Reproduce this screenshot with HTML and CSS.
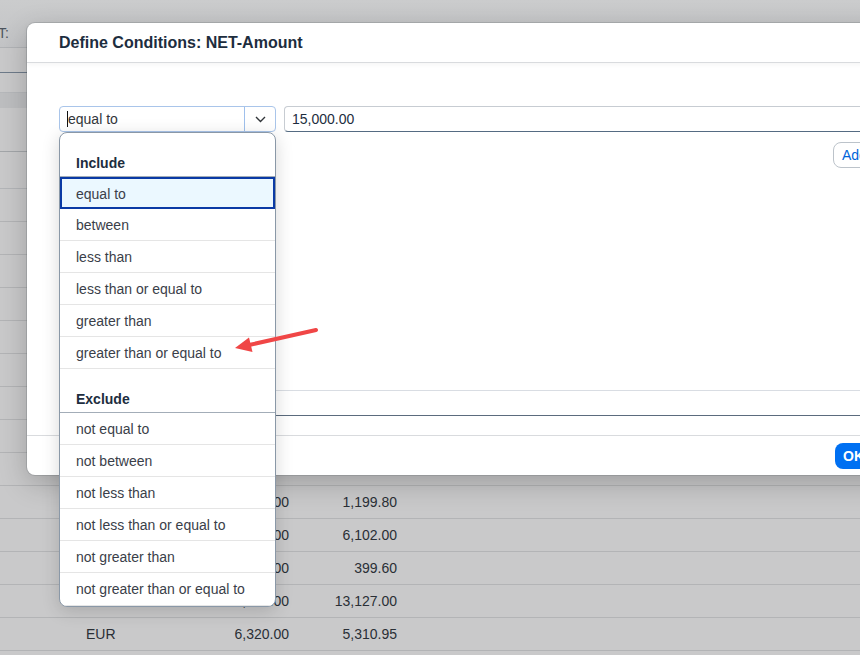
FILE: index.html
```html
<!DOCTYPE html>
<html lang="en">
<head>
<meta charset="utf-8">
<title>Define Conditions</title>
<link rel="stylesheet" href="styles.css">
</head>
<body>
<div class="page">
  <div class="topbar"><div class="cut"><span>NET-AMOUNT:</span></div></div>
  <div class="bgrow r1"></div>
  <div class="bgrow r2"></div>
  <div class="band"></div>
  <div class="bgrow r3"></div>
  <div class="bgrow r4"></div>
  <div class="trow"></div><div class="trow"></div><div class="trow"></div>
  <div class="trow"></div><div class="trow"></div><div class="trow"></div>
  <div class="trow"></div><div class="trow"></div><div class="trow"></div>
  <div class="trow"><span class="num">1,428.00</span><span class="num">1,199.80</span></div>
  <div class="trow"><span class="num">7,180.00</span><span class="num">6,102.00</span></div>
  <div class="trow"><span class="num">470.00</span><span class="num">399.60</span></div>
  <div class="trow"><span class="num">15,445.00</span><span class="num">13,127.00</span></div>
  <div class="trow"><span class="cur">EUR</span><span class="num">6,320.00</span><span class="num">5,310.95</span></div>
  <div class="trow"></div>
</div>

<div class="modal">
  <div class="modal-head">Define Conditions: NET-Amount</div>
  <div class="modal-body">
    <div class="cond-row">
      <div class="select">
        <div class="select-text"><span class="caret"></span>equal to</div>
        <div class="select-btn">
          <svg width="11" height="7" viewBox="0 0 11 7"><path d="M1 1 L5.5 5.5 L10 1" fill="none" stroke="#32363a" stroke-width="1.4"/></svg>
        </div>
      </div>
      <div class="value-input">15,000.00</div>
    </div>
    <div class="add-row"><button class="btn-add">Add</button></div>
    <div class="grid-head"></div>
  </div>
  <div class="modal-foot"><button class="btn-ok">OK</button></div>
</div>

<div class="popover">
  <div class="group">Include</div>
  <div class="item selected">equal to</div>
  <div class="item">between</div>
  <div class="item">less than</div>
  <div class="item">less than or equal to</div>
  <div class="item">greater than</div>
  <div class="item">greater than or equal to</div>
  <div class="group">Exclude</div>
  <div class="item">not equal to</div>
  <div class="item">not between</div>
  <div class="item">not less than</div>
  <div class="item">not less than or equal to</div>
  <div class="item">not greater than</div>
  <div class="item last">not greater than or equal to</div>
</div>

<svg class="arrow" width="92" height="34" viewBox="0 0 92 34">
  <line x1="86" y1="8" x2="19" y2="23" stroke="#f04646" stroke-width="4" stroke-linecap="round"/>
  <polygon points="5,26 22.5,30 19,15.5" fill="#f04646"/>
</svg>
</body>
</html>
```

FILE: styles.css
```css
html, body {
  margin: 0;
  padding: 0;
  overflow: hidden;
}
body {
  width: 860px;
  height: 655px;
  position: relative;
  font-family: "Liberation Sans", Arial, sans-serif;
  font-size: 14px;
  color: #32363a;
  background: #c9c9ca;
}
.page {
  width: 860px;
  height: 655px;
  overflow: hidden;
  background: #c9c9ca;
}
.topbar {
  height: 47px;
  border-bottom: 1px solid #b1b3b6;
  background: linear-gradient(#cbcccd, #c3c4c6);
}
.cut {
  width: 9px;
  display: flex;
  justify-content: flex-end;
  padding-top: 24px;
  line-height: 18px;
  color: #4d545c;
  white-space: nowrap;
}
.bgrow { box-sizing: border-box; }
.r1 { height: 25px; border-bottom: 1px solid #6e7b8a; }
.r2 { height: 20px; border-bottom: 1px solid #b6b8bb; }
.band { height: 15px; background: #bdbec0; }
.r3 { height: 44px; border-bottom: 1px solid #a3a6a9; }
.r4 { height: 37px; border-bottom: 1px solid #b3b5b8; }
.trow {
  box-sizing: border-box;
  height: 33px;
  border-bottom: 1px solid #b3b4b6;
  display: grid;
  grid-template-columns: 86px 60px 143px 108px;
  align-items: center;
  color: #2a2f36;
}
.trow .cur { grid-column: 2; }
.trow .num { text-align: right; }
.trow .num:first-child { grid-column: 3; }

.modal {
  position: absolute;
  left: 27px;
  top: 23px;
  width: 900px;
  height: 452px;
  background: #fff;
  border-radius: 8px;
  display: flex;
  flex-direction: column;
  box-shadow: 0 0 0 1px rgba(60, 70, 80, 0.18), 0 8px 28px rgba(0, 0, 0, 0.22);
}
.modal-head {
  height: 39px;
  border-bottom: 1px solid #d9dbde;
  display: flex;
  align-items: center;
  padding-left: 32px;
  font-weight: bold;
  font-size: 16px;
  color: #1d2d3e;
  box-shadow: 0 2px 4px rgba(0, 0, 0, 0.04);
}
.modal-body {
  flex: 1;
  padding: 43px 0 0 32px;
}
.cond-row {
  display: flex;
  gap: 8px;
  height: 26px;
}
.select {
  box-sizing: border-box;
  width: 217px;
  height: 26px;
  border: 1px solid #a9c5ea;
  border-radius: 4px;
  display: flex;
}
.select-text {
  flex: 1;
  display: flex;
  align-items: center;
  padding-left: 7px;
  color: #32363a;
}
.caret {
  width: 1px;
  height: 16px;
  background: #111;
}
.select-btn {
  width: 31px;
  box-sizing: border-box;
  border-left: 1px solid #9fc0ec;
  border-radius: 0 4px 4px 0;
  display: flex;
  align-items: center;
  justify-content: center;
}
.value-input {
  flex: 1;
  box-sizing: border-box;
  height: 26px;
  border: 1px solid #c7ccd2;
  border-bottom-color: #556b82;
  border-radius: 4px;
  padding-left: 7px;
  display: flex;
  align-items: center;
  color: #1d2d3e;
}
.add-row {
  margin-top: 10px;
  height: 26px;
}
.btn-add {
  margin-left: 774px;
  height: 26px;
  box-sizing: border-box;
  border: 1px solid #bcc3ca;
  border-radius: 8px;
  background: #fff;
  color: #0064d9;
  font-family: inherit;
  font-size: 14px;
  padding: 0 8px;
}
.grid-head {
  margin-top: 222px;
  height: 24px;
  border-top: 1px solid #d9dde3;
  border-bottom: 1px solid #5b6b7d;
}
.modal-foot {
  border-top: 1px solid #d9dbde;
  padding-top: 7px;
  box-sizing: border-box;
  height: 40px;
}
.btn-ok {
  margin-left: 808px;
  height: 26px;
  border: none;
  border-radius: 8px;
  background: #0070f2;
  color: #fff;
  font-family: inherit;
  font-size: 14px;
  font-weight: bold;
  padding: 0 8px;
}

.popover {
  position: absolute;
  left: 59px;
  top: 132px;
  width: 217px;
  box-sizing: border-box;
  border: 1px solid #8a98a7;
  border-radius: 8px;
  background: #fff;
  overflow: hidden;
  box-shadow: 0 4px 18px rgba(0, 0, 0, 0.16);
}
.group {
  box-sizing: border-box;
  height: 44px;
  padding: 20px 0 0 16px;
  line-height: 20px;
  font-weight: bold;
  color: #1d2d3e;
  border-bottom: 1px solid #a3adb8;
}
.item {
  box-sizing: border-box;
  height: 32px;
  padding-left: 16px;
  line-height: 33px;
  border-bottom: 1px solid #e5e5e5;
  color: #3a4049;
  white-space: nowrap;
}
.item.last { height: 33px; }
.item.selected {
  border: 2px solid #0a3aa5;
  background: #ebf8ff;
  padding-left: 14px;
  line-height: 30px;
}
.arrow {
  position: absolute;
  left: 230px;
  top: 322px;
}
```
